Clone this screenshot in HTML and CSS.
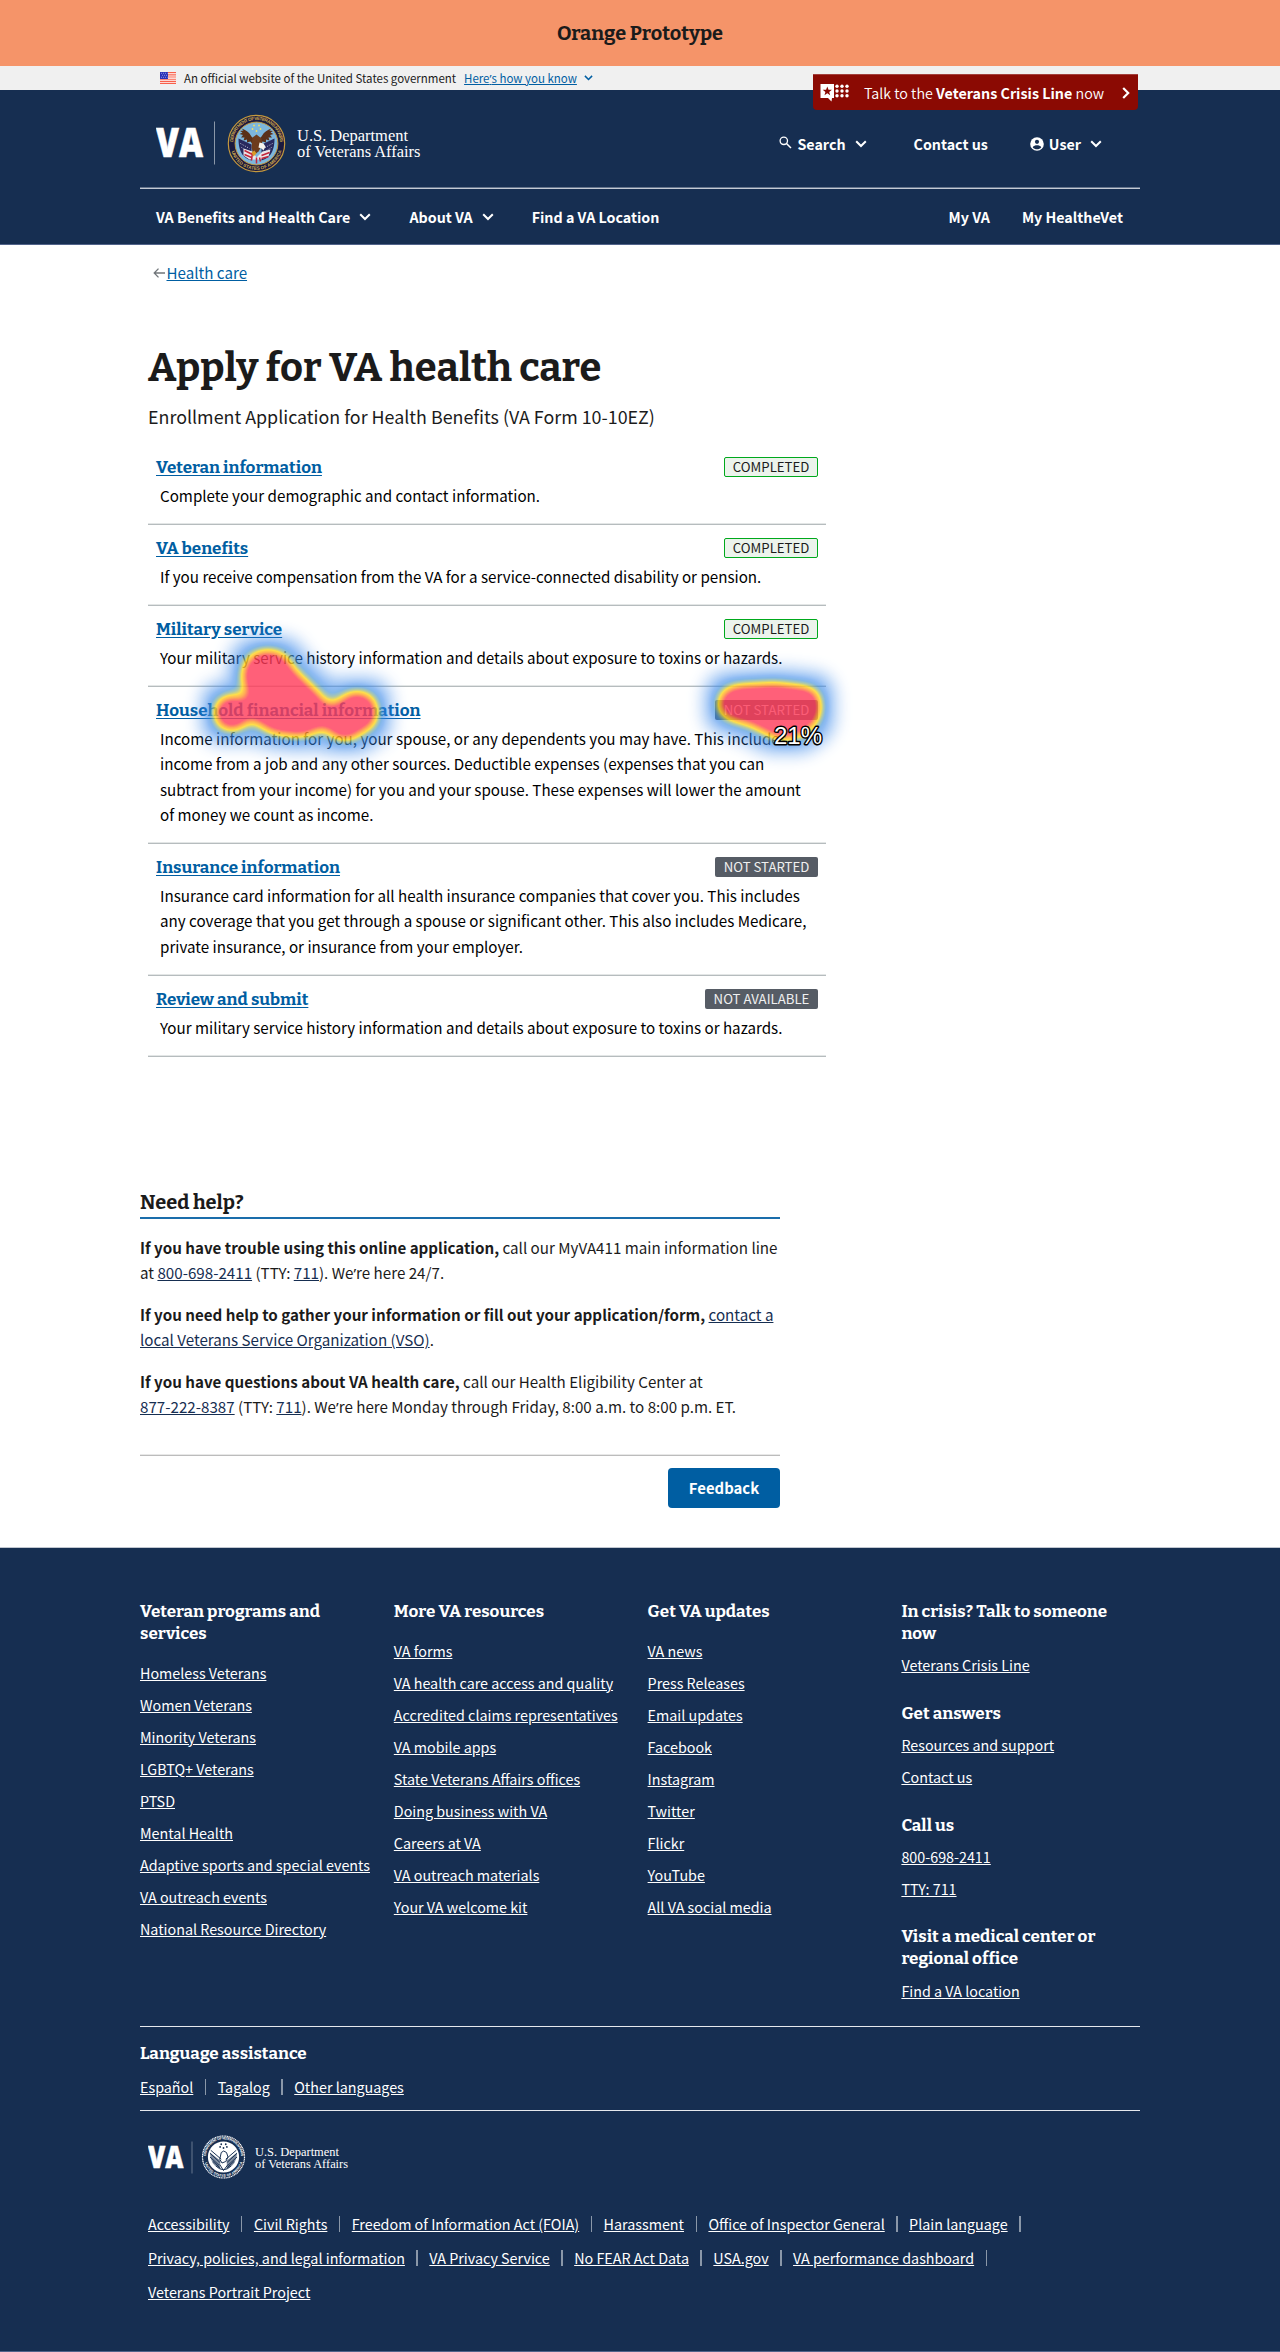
FILE: index.html
```
<!DOCTYPE html>
<html lang="en">
<head>
<meta charset="utf-8">
<title>Apply for VA health care</title>
<link rel="stylesheet" href="styles.css">
</head>
<body>
<svg class="defs" width="0" height="0" aria-hidden="true">
  <defs>
    <symbol id="chevron" viewBox="0 0 12 8"><path d="M1.200 1.200 6 6l4.800-4.800" fill="none" stroke="currentColor" stroke-width="2"/></symbol>
    <path id="arc-top" d="M-23.600 0A23.600 23.600 0 0 1 23.600 0"/>
    <path id="arc-bottom" d="M-26.300 0A26.300 26.300 0 0 0 26.300 0"/>
    <path id="wing" d="M-1-5C-5-5-5-8-8-11C-10-13-12-14-15-15L-13-13L-16.500-12.500L-14-11L-17-9.500L-13.500-8.500L-15.500-6L-12-6L-13-3L-9.500-4L-9.500-1L-6-2L-3 2Z"/>
  </defs>
</svg>

<div class="banner">Orange Prototype</div>

<div class="gov">
  <div class="wrap gov-row">
    <svg class="flag" width="16" height="12" viewBox="0 0 16 12">
      <path fill="#fff" d="M0 0h16v12H0z"/>
      <path stroke="#f8604b" stroke-width="1.150" d="M0 .6h16M0 2.800h16M0 5h16M0 7.200h16M0 9.300h16M0 11.400h16"/>
      <path fill="#2b32b8" d="M0 0h8v7H0z"/>
      <path stroke="#c3c8f4" stroke-width=".8" stroke-dasharray=".8 1.200" d="M1 1.300h6.500M2 3.300h5.500M1 5.300h6.500"/>
    </svg>
    <span class="gov-text">An official website of the United States government</span>
    <a class="gov-link">Here<span class="apos">’</span>s how you know</a>
    <svg class="gov-chev" width="9" height="6"><use href="#chevron"/></svg>
    <a class="crisis">
      <svg width="29" height="18" viewBox="0 0 29 18">
        <path fill="#fff" d="M.5 0H14v14h-2l-.5 3.500L8 14H.5z"/>
        <path fill="#8b0a03" d="M7.300 2.500l1.200 3.200 3.400.1-2.700 2.100 1 3.300-2.900-1.900-2.800 1.900.9-3.300-2.700-2.100 3.400-.1z"/>
        <g fill="#fff"><circle cx="17" cy="2.200" r="1.700"/><circle cx="22" cy="2.200" r="1.700"/><circle cx="27" cy="2.200" r="1.700"/><circle cx="17" cy="7" r="1.700"/><circle cx="22" cy="7" r="1.700"/><circle cx="27" cy="7" r="1.700"/><circle cx="17" cy="11.800" r="1.700"/><circle cx="22" cy="11.800" r="1.700"/><circle cx="27" cy="11.800" r="1.700"/></g>
      </svg>
      <span>Talk to the <b>Veterans Crisis Line</b> now</span>
      <svg class="crisis-arrow" width="8" height="12" viewBox="0 0 8 12"><path d="M1.200 1l5 5-5 5" fill="none" stroke="#fff" stroke-width="2.200"/></svg>
    </a>
  </div>
</div>

<header class="header">
  <div class="wrap top">
    <svg class="logo" width="270" height="62" viewBox="0 0 270 62">
      <text class="va" x="0" y="45" font-size="40.500" textLength="47" lengthAdjust="spacingAndGlyphs">VA</text>
      <path d="M58.500 9.500v43" stroke="#8a97a8" stroke-width="1"/>
      <g transform="translate(100.500 31.500)">
        <circle r="28.700" fill="#1b1a3f"/>
        <circle r="28.200" fill="none" stroke="#c39a3f" stroke-width="1.200"/>
        <circle r="21.400" fill="#7db6dc" stroke="#c39a3f" stroke-width="1"/>
        <text class="ring gold"><textPath href="#arc-top" startOffset="1.500" textLength="71">DEPARTMENT OF VETERANS AFFAIRS</textPath></text>
        <text class="ring gold"><textPath href="#arc-bottom" startOffset="8" textLength="67">UNITED STATES OF AMERICA</textPath></text>
        <g fill="#f3dd64"><circle cx="-2.500" cy="-18" r=".9"/><circle cx="2.500" cy="-18" r=".9"/><circle cx="-4" cy="-14.500" r=".9"/><circle cx="4" cy="-14.500" r=".9"/><circle cy="-12.500" r=".9"/></g>
        <path fill="#28295f" d="M-18-5L-5 1v16C-12 15-18 10-18-5zM18-5L5 1v16C12 15 18 10 18-5z"/>
        <path stroke="#e9eaf4" stroke-width=".9" stroke-dasharray=".9 1.600" d="M-16 0l9 5M-15 4l8 5M16 0l-9 5M15 4l-8 5"/>
        <path fill="#e9e6ea" d="M-13 5L-4 8L0 14L6 8L14 6L12 13L4 16H-7L-13 12z"/>
        <path stroke="#c3253b" stroke-width="1.500" fill="none" d="M-12 7l8 4M-12 11l7 3M-4 9l-1 8M13 9l-8 3M12 13l-7 2M0 14v6M3 14l1 4"/>
        <use href="#wing" fill="#5a3019"/><use href="#wing" fill="#5a3019" transform="scale(-1 1)"/>
        <path fill="#6d3c1d" d="M-4-6L0-9L5-5L6 1L2 8L-3 12L-5 4z"/>
        <path fill="#f5f3ee" d="M3-1l4 1 2 3-2 4-2-2-3-1z"/>
        <path fill="#d99a27" d="M-5 9l3-2 2 3-3 3z"/>
      </g>
      <g class="dept" font-size="17"><text x="141" y="28.700" textLength="111" lengthAdjust="spacingAndGlyphs">U.S. Department</text><text x="141" y="45" textLength="123.500" lengthAdjust="spacingAndGlyphs">of Veterans Affairs</text></g>
    </svg>
    <nav class="tools">
      <a class="tool">
        <svg class="i-search" width="13" height="13" viewBox="0 0 13 13"><circle cx="4.800" cy="4.800" r="3.700" fill="none" stroke="#fff" stroke-width="1.300"/><path d="M7.500 7.500l4.500 4.500" stroke="#fff" stroke-width="1.500"/></svg>
        <span>Search</span><svg class="chev" width="12" height="8"><use href="#chevron"/></svg>
      </a>
      <a class="tool tool-contact">Contact us</a>
      <a class="tool">
        <svg class="i-user" width="14" height="14" viewBox="0 0 14 14"><circle cx="7" cy="7" r="6.800" fill="#fff"/><circle cx="7" cy="4.800" r="2.100" fill="#162e51"/><path fill="#162e51" d="M2.700 10.200C3.500 8.700 5.500 8.200 7 8.200s3.500.5 4.300 2C10.300 11.600 8.700 12.200 7 12.200s-3.300-.6-4.300-2z"/></svg>
        <span>User</span><svg class="chev" width="12" height="8"><use href="#chevron"/></svg>
      </a>
    </nav>
  </div>
  <nav class="wrap menu">
    <a>VA Benefits and Health Care<svg class="chev" width="12" height="8"><use href="#chevron"/></svg></a>
    <a>About VA<svg class="chev" width="12" height="8"><use href="#chevron"/></svg></a>
    <a>Find a VA Location</a>
    <a class="menu-right">My VA</a>
    <a>My HealtheVet</a>
  </nav>
</header>

<main class="wrap main">
  <div class="crumb">
    <svg width="12" height="10" viewBox="0 0 12 10"><path d="M5.500.6L1.200 5l4.300 4.400M1.200 5H12" fill="none" stroke="#71767a" stroke-width="1.300"/></svg>
    <a>Health care</a>
  </div>
  <h1>Apply for VA health care</h1>
  <p class="sub">Enrollment Application for Health Benefits (VA Form 10-10EZ)</p>

  <ol class="tasks">
    <li><div class="task-head"><a>Veteran information</a><span class="tag done">COMPLETED</span></div>
      <p>Complete your demographic and contact information.</p></li>
    <li><div class="task-head"><a>VA benefits</a><span class="tag done">COMPLETED</span></div>
      <p>If you receive compensation from the VA for a service-connected disability or pension.</p></li>
    <li><div class="task-head"><a>Military service</a><span class="tag done">COMPLETED</span></div>
      <p>Your military service history information and details about exposure to toxins or hazards.</p></li>
    <li><div class="task-head"><a>Household financial information</a><span class="tag">NOT STARTED</span></div>
      <p>Income information for you, your spouse, or any dependents you may have. This includes<br>income from a job and any other sources. Deductible expenses (expenses that you can<br>subtract from your income) for you and your spouse. These expenses will lower the amount<br>of money we count as income.</p>
      <svg class="heat" width="740" height="160" viewBox="130 620 740 160">
        <defs>
          <filter id="heatmap" x="130" y="620" width="740" height="160" filterUnits="userSpaceOnUse" color-interpolation-filters="sRGB">
            <feGaussianBlur in="SourceAlpha" stdDeviation="6.500" result="core"/>
            <feMorphology in="SourceAlpha" operator="dilate" radius="12"/>
            <feGaussianBlur stdDeviation="8.500" result="halo"/>
            <feComposite in="core" in2="halo" operator="arithmetic" k2=".55" k3=".45"/>
            <feColorMatrix values="0 0 0 1 0  0 0 0 1 0  0 0 0 1 0  0 0 0 1 0"/>
            <feComponentTransfer>
              <feFuncR type="table" tableValues=".22 .22 .22 .22 .22 .24 .55 1 1 1 1"/>
              <feFuncG type="table" tableValues=".53 .53 .53 .53 .53 .56 .7 .85 .6 .23 .23"/>
              <feFuncB type="table" tableValues=".92 .92 .92 .92 .92 .85 .55 .12 .18 .35 .35"/>
              <feFuncA type="table" tableValues="0 .14 .28 .42 .56 .64 .72 .81 .81 .81 .81"/>
            </feComponentTransfer>
          </filter>
        </defs>
        <g filter="url(#heatmap)">
          <circle cx="268" cy="676" r="27"/><circle cx="232" cy="713" r="18.500"/>
          <path d="M245 692L292 666L325 698V722L300 738L272 734L250 720z"/>
          <circle cx="302" cy="714" r="23"/>
          <circle cx="357" cy="712" r="21.500"/><circle cx="345" cy="720" r="21"/>
          <path d="M318 703h30v27h-30z"/>
          <path d="M717 705Q719 686 740 684L775 682L808 686Q822 691 822 708Q820 725 805 733Q792 744 776 739L748 725Q719 721 717 705z"/>
        </g>
        <text x="774" y="744" class="pct">21%</text>
      </svg></li>
    <li><div class="task-head"><a>Insurance information</a><span class="tag">NOT STARTED</span></div>
      <p>Insurance card information for all health insurance companies that cover you. This includes<br>any coverage that you get through a spouse or significant other. This also includes Medicare,<br>private insurance, or insurance from your employer.</p></li>
    <li><div class="task-head"><a>Review and submit</a><span class="tag">NOT AVAILABLE</span></div>
      <p>Your military service history information and details about exposure to toxins or hazards.</p></li>
  </ol>

  <section class="help">
    <h2>Need help?</h2>
    <p><b>If you have trouble using this online application,</b> call our MyVA411 main information line<br>at <a>800-698-2411</a> (TTY: <a>711</a>). We<span class="apos">’</span>re here 24/7.</p>
    <p><b>If you need help to gather your information or fill out your application/form,</b> <a>contact a<br>local Veterans Service Organization (VSO)</a>.</p>
    <p><b>If you have questions about VA health care,</b> call our Health Eligibility Center at<br><a>877-222-8387</a> (TTY: <a>711</a>). We<span class="apos">’</span>re here Monday through Friday, 8:00 a.m. to 8:00 p.m. ET.</p>
    <div class="feedback"><button>Feedback</button></div>
  </section>
</main>

<footer class="footer">
  <div class="wrap">
    <div class="cols">
      <div><h3>Veteran programs and services</h3>
        <a>Homeless Veterans</a><a>Women Veterans</a><a>Minority Veterans</a><a>LGBTQ+ Veterans</a><a>PTSD</a><a>Mental Health</a><a>Adaptive sports and special events</a><a>VA outreach events</a><a>National Resource Directory</a></div>
      <div><h3>More VA resources</h3>
        <a>VA forms</a><a>VA health care access and quality</a><a>Accredited claims representatives</a><a>VA mobile apps</a><a>State Veterans Affairs offices</a><a>Doing business with VA</a><a>Careers at VA</a><a>VA outreach materials</a><a>Your VA welcome kit</a></div>
      <div><h3>Get VA updates</h3>
        <a>VA news</a><a>Press Releases</a><a>Email updates</a><a>Facebook</a><a>Instagram</a><a>Twitter</a><a>Flickr</a><a>YouTube</a><a>All VA social media</a></div>
      <div class="contact">
        <h3>In crisis? Talk to someone now</h3><a>Veterans Crisis Line</a>
        <h3>Get answers</h3><a>Resources and support</a><a>Contact us</a>
        <h3>Call us</h3><a>800-698-2411</a><a>TTY: 711</a>
        <h3>Visit a medical center or regional office</h3><a>Find a VA location</a></div>
    </div>
    <div class="lang">
      <h3>Language assistance</h3>
      <div class="links"><span><a>Español</a></span><span><a>Tagalog</a></span><span><a>Other languages</a></span></div>
    </div>
    <svg class="logo-small" width="205" height="46" viewBox="0 0 205 46">
      <text class="va" x="0" y="34" font-size="30.500" textLength="35.500" lengthAdjust="spacingAndGlyphs">VA</text>
      <path d="M44 7.500v32" stroke="#66768e" stroke-width="1"/>
      <g transform="translate(75.500 23) scale(.75)">
        <circle r="28" fill="none" stroke="#fff" stroke-width="1.600" stroke-dasharray="1.600 .7"/>
        <circle r="20.800" fill="#fff"/>
        <text class="ring light"><textPath href="#arc-top" startOffset="1.500" textLength="71">DEPARTMENT OF VETERANS AFFAIRS</textPath></text>
        <text class="ring light"><textPath href="#arc-bottom" startOffset="8" textLength="67">UNITED STATES OF AMERICA</textPath></text>
        <g fill="#162e51"><circle cx="-3" cy="-17" r="1.200"/><circle cx="3" cy="-17" r="1.200"/><circle cx="-4.500" cy="-13.500" r="1.200"/><circle cx="4.500" cy="-13.500" r="1.200"/><circle cy="-12" r="1.200"/></g>
        <path fill="#162e51" opacity=".55" d="M-18-6L-4 5L-5 16Q-18 10-18-6zM18-6L4 5L5 16Q18 10 18-6z"/>
        <g fill="none" stroke="#162e51" stroke-width="1.300">
          <path d="M-17-9L-3 3M-18-5L-5 7M-18 0L-6 11M17-9L3 3M18-5L5 7M18 0L6 11M-14 6L-4 15M14 6L4 15"/>
          <path d="M-3-6Q0-10 4-6L6 0 3 6-2 8-5 3zM-5 10L0 18L6 10M-10 12Q0 22 10 12"/>
        </g>
      </g>
      <g class="dept" font-size="13"><text x="107" y="21.500" textLength="84" lengthAdjust="spacingAndGlyphs">U.S. Department</text><text x="107" y="33.700" textLength="93" lengthAdjust="spacingAndGlyphs">of Veterans Affairs</text></g>
    </svg>
    <div class="links legal"><span><a>Accessibility</a></span><span><a>Civil Rights</a></span><span><a>Freedom of Information Act (FOIA)</a></span><span><a>Harassment</a></span><span><a>Office of Inspector General</a></span><span><a>Plain language</a></span><span><a>Privacy, policies, and legal information</a></span><span><a>VA Privacy Service</a></span><span><a>No FEAR Act Data</a></span><span><a>USA.gov</a></span><span><a>VA performance dashboard</a></span><span><a>Veterans Portrait Project</a></span></div>
  </div>
</footer>
</body>
</html>
```
FILE: styles.css
```
* { box-sizing: border-box; }
body { margin: 0; background: #fff; color: #1b1b1b; font: 15.170px/25.330px "Noto Sans CJK SC", "Noto Sans", sans-serif; }
h1, h2, h3, p, ol { margin: 0; padding: 0; font-weight: inherit; }
h1, h2, h3, .banner, .task-head a { font-family: Bitter, "DejaVu Serif Condensed", serif; font-weight: 700; }
svg { display: block; flex: none; }
.defs { position: absolute; }
.apos { font-family: "Noto Sans", sans-serif; line-height: 1; }
.wrap { width: 1000px; margin: 0 auto; }

.banner { height: 66px; background: #f59469; text-align: center; font-size: 19.900px; line-height: 66px; }

.gov { height: 24px; background: #f0f0f0; font-size: 11.470px; line-height: 24px; }
.gov-row { display: flex; align-items: center; height: 24px; padding-left: 20px; position: relative; }
.gov-text { margin-left: 8px; }
.gov-link { margin-left: 8px; color: #005ea2; text-decoration: underline; }
.gov-chev { margin-left: 7px; color: #005ea2; }
.crisis { position: absolute; left: 673px; top: 8px; width: 325px; height: 36px; display: flex; align-items: center; padding: 0 8px 0 7px; background: #8b0a03; color: #fff; border-radius: 0 0 4px 4px; border-top: 1px solid #a3403c; font-size: 14.300px; }
.crisis span { margin: 1px 0 0 15px; white-space: nowrap; font-weight: 350; }
.crisis-arrow { margin-left: auto; }

.header { height: 155px; background: #162e51; color: #fff; border-bottom: 1px solid #51638a; font-size: 14.270px; font-weight: 700; }
.top { height: 97px; display: flex; padding: 22px 38px 0 16px; }
.va { font-family: "Open Sans", sans-serif; font-weight: 800; fill: #fff; stroke: #fff; stroke-width: .5px; }
.dept { font-family: "Liberation Serif", serif; font-weight: 400; fill: #fff; }
.ring { font-family: "Liberation Sans", sans-serif; font-weight: 700; font-size: 4.600px; }
.gold { fill: #c9a54d; }
.light { fill: #fff; }
.tools { margin-left: auto; display: flex; height: 64px; line-height: 64px; }
.tool { display: flex; align-items: center; }
.tool-contact { margin: 0 42px 0 47px; }
.i-search { margin: -3px 5px 0 0; }
.i-user { margin-right: 5px; }
.chev { margin-left: 9px; }
.menu { display: flex; height: 57px; align-items: center; padding: 0 17px 0 16px; border-top: 1px solid #c3c9d3; box-shadow: 0 -1px #64748d; margin-top: 1px; }
.menu a { display: flex; align-items: center; margin-right: 38px; }
.menu .menu-right { margin-left: auto; margin-right: 32px; }
.menu a:last-child { margin-right: 0; }

.main { padding-top: 15px; height: 1302px; }
.crumb { display: flex; align-items: center; height: 25px; padding-left: 13px; line-height: 25px; }
.crumb a { margin-left: 1.500px; color: #005ea2; text-decoration: underline; }
h1 { margin: 58px 0 0 8px; font-size: 39.860px; line-height: 50px; }
.sub { margin: 9px 0 14px 8px; font-size: 17.860px; line-height: 28px; }

.tasks { width: 678px; margin-left: 8px; list-style: none; color: #000; }
.tasks li { position: relative; padding: 13px 8px 15.500px; border-bottom: 1px solid #b6bcbe; box-shadow: inset 0 -1px #e3e6e6; }
.task-head { display: flex; justify-content: space-between; height: 22px; line-height: 22px; }
.task-head a { color: #005ea2; font-size: 17px; text-decoration: underline; text-underline-offset: 2px; }
.tasks p { margin: 4.170px 0 0 4px; white-space: nowrap; }
.tag { height: 20px; padding: 0 8.700px; border-radius: 2px; background: #565c65; color: #f0f0f0; font-size: 13.200px; line-height: 20px; }
.tag.done { padding: 0 7.700px; border: 1px solid #00a91c; background: #ecf3ec; color: #1b1b1b; line-height: 18px; }
.heat { position: absolute; left: -18px; top: -67px; }
.pct { font: 24px "Liberation Sans", sans-serif; fill: #fff; stroke: #000; stroke-width: 2.800px; paint-order: stroke; stroke-linejoin: round; }

.help { width: 640px; margin-top: 132px; }
h2 { height: 30px; padding-bottom: 2px; font-size: 20px; line-height: 26px; border-bottom: 2px solid #1a6dab; }
.help p { margin: 16.330px 0; font-size: 15.170px; white-space: nowrap; }
.help a { color: #162e51; text-decoration: underline; }
.feedback { margin-top: 35px; padding-top: 12px; border-top: 1px solid #bcbcbc; box-shadow: 0 -1px #e8e8e8; display: flex; justify-content: flex-end; }
button { width: 112px; height: 40px; border: 0; border-radius: 4px; background: #005ea2; color: #fff; font: 700 14.900px/40px "Noto Sans CJK SC", sans-serif; padding: 0; }

.footer { height: 805px; background: #162e51; color: #fff; padding-top: 53px; border-top: 1px solid #c1c7d0; border-bottom: 1px solid #51638a; font-size: 14.320px; }
.footer a { text-decoration: underline; }
h3 { font-size: 17px; line-height: 22px; }
.cols { display: grid; grid-template-columns: repeat(4, 253.800px); height: 425px; }
.cols a { display: block; width: max-content; line-height: 32px; }
.cols h3 { width: 225px; margin-bottom: 12px; }
.cols .contact h3 { margin: 0 0 4.300px; }
.cols .contact a + h3 { margin-top: 21.500px; }
.lang { height: 85px; border-top: 1px solid #e6e9ed; border-bottom: 1px solid #e6e9ed; padding-top: 15.500px; }
.lang .links { margin-top: 11.500px; line-height: 22px; }
.links { display: flex; flex-wrap: wrap; }
.links span { display: flex; align-items: center; }
.links span:not(:last-child)::after { content: ""; width: 1.400px; height: 16px; margin: 0 11.500px; background: #8a97a8; }
.logo-small { margin: 23px 0 0 8px; }
.legal { margin: 27px 0 0 8px; line-height: 34px; }
```
